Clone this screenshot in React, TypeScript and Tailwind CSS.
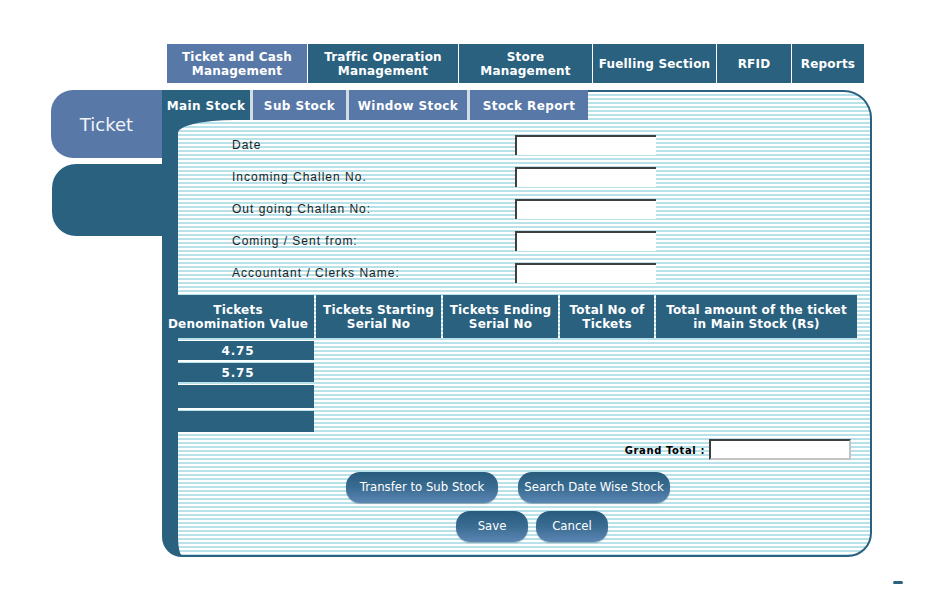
const stripes =
  'bg-[repeating-linear-gradient(180deg,#ffffff_0px,#ffffff_2px,#b9e1ea_2px,#b9e1ea_4px)] bg-fixed';

const NAV = [
  { lines: ['Ticket and Cash', 'Management'], w: 'w-[140px]', active: true },
  { lines: ['Traffic Operation', 'Management'], w: 'w-[150px]', active: false },
  { lines: ['Store', 'Management'], w: 'w-[133px]', active: false },
  { lines: ['Fuelling Section'], w: 'w-[123px]', active: false },
  { lines: ['RFID'], w: 'w-[74px]', active: false },
  { lines: ['Reports'], w: 'w-[72px]', active: false },
];

const SUB_TABS = [
  { label: 'Main Stock', w: 'w-[88px]', active: true },
  { label: 'Sub Stock', w: 'w-[96px]', active: false },
  { label: 'Window Stock', w: 'w-[121px]', active: false },
  { label: 'Stock Report', w: 'w-[121px]', active: false },
];

const FIELDS = [
  'Date',
  'Incoming Challen No.',
  'Out going Challan No:',
  'Coming / Sent from:',
  'Accountant / Clerks Name:',
];

const COLUMNS = [
  { lines: ['Tickets', 'Denomination Value'], w: 'w-[152px] -ml-[16px]' },
  { lines: ['Tickets Starting', 'Serial No'], w: 'w-[125px]' },
  { lines: ['Tickets Ending', 'Serial No'], w: 'w-[115px]' },
  { lines: ['Total No of', 'Tickets'], w: 'w-[94px]' },
  { lines: ['Total amount of the ticket', 'in Main Stock (Rs)'], w: 'w-[201px]' },
];

const ROWS = [
  { value: '4.75', h: 'h-[19px]' },
  { value: '5.75', h: 'h-[19px]' },
  { value: '', h: 'h-[23px]' },
  { value: '', h: 'h-[21px]' },
];

function PillButton({ label, w }: { label: string; w: string }) {
  return (
    <button
      className={`${w} h-[31px] rounded-[14px] bg-linear-to-b from-[#285c7c] via-[#3a6c92] to-[#5b86b4] text-white text-[11.7px] font-['DejaVu_Sans',Verdana,sans-serif] shadow-[0_1px_1px_rgba(0,0,0,0.25)]`}
    >
      {label}
    </button>
  );
}

export default function App() {
  return (
    <div className="relative w-[951px] h-[591px] bg-white overflow-hidden font-['DejaVu_Sans',Verdana,sans-serif]">
      {/* Top navigation */}
      <nav className="flex gap-px pl-[167px] pt-[44px]">
        {NAV.map((item) => (
          <div
            key={item.lines.join(' ')}
            className={`${item.w} h-[39px] flex flex-col items-center justify-center text-white text-[12px] font-bold leading-[14px] tracking-[0.2px] ${
              item.active ? 'bg-[#5878a8]' : 'bg-[#29617f]'
            }`}
          >
            {item.lines.map((l) => (
              <span key={l}>{l}</span>
            ))}
          </div>
        ))}
      </nav>

      <div className="flex pl-[51px] mt-[7px]">
        {/* Left side tabs */}
        <div className="w-[111px] flex flex-col">
          <div className="h-[68px] rounded-l-[22px] bg-[#5878a8] flex items-center justify-center text-[18px] text-[#f0f4f8]">
            Ticket
          </div>
          <div className="h-[72px] ml-px mt-[6px] rounded-l-[24px] bg-[#29617f]" />
        </div>

        {/* Main panel */}
        <div
          className={`w-[710px] h-[467px] flex flex-col border-2 border-l-[16px] border-[#29617f] rounded-tr-[28px] rounded-br-[24px] rounded-bl-[20px] ${stripes}`}
        >
          <div className="flex -mt-[2px] -ml-[16px] h-[30px]">
            {SUB_TABS.map((t, i) => (
              <div
                key={t.label}
                className={`${t.w} h-full flex items-center justify-center pt-[2px] text-white text-[12px] font-bold tracking-[0.4px] ${
                  t.active ? 'bg-[#29617f]' : 'bg-[#5878a8]'
                } ${i > 0 ? 'border-l-[3px] border-[#d3dbe4]' : ''}`}
              >
                {t.label}
              </div>
            ))}
          </div>

          <div className="relative flex-1 flex flex-col">
            {/* curved corner under the active tab */}
            <div className="absolute left-0 top-0 w-[70px] h-[16px] bg-[#29617f]">
              <div className={`absolute inset-0 rounded-tl-[56px_13px] ${stripes}`} />
            </div>

            {/* Form fields */}
            <div className="relative flex flex-col gap-[12px] pt-[15px]">
              {FIELDS.map((f) => (
                <div key={f} className="flex items-center h-[20px]">
                  <span className="w-[337px] pl-[54px] text-[12px] tracking-[1px] text-[#1e1e1e] font-['Liberation_Sans',Arial,sans-serif]">
                    {f}
                  </span>
                  <div className="w-[141px] h-[20px] bg-white border-t-2 border-l-2 border-[#3e3e3e]" />
                </div>
              ))}
            </div>

            {/* Ticket table */}
            <div className="mt-[12px] flex gap-[2px] h-[43px]">
              {COLUMNS.map((c) => (
                <div
                  key={c.lines.join(' ')}
                  className={`${c.w} bg-[#29617f] flex flex-col items-center justify-center text-white text-[12px] font-bold leading-[14px] tracking-[0.2px] whitespace-nowrap`}
                >
                  {c.lines.map((l) => (
                    <span key={l}>{l}</span>
                  ))}
                </div>
              ))}
            </div>
            <div className="mt-[3px] flex flex-col gap-[3px]">
              {ROWS.map((r, i) => (
                <div
                  key={i}
                  className={`${r.h} w-[136px] bg-[#29617f] pr-[16px] flex items-center justify-center text-white text-[12px] font-bold tracking-[0.8px]`}
                >
                  {r.value}
                </div>
              ))}
            </div>

            {/* Grand total */}
            <div className="mt-[7px] flex items-end justify-end pr-[19px]">
              <span className="mr-[4px] mb-[2px] text-[10px] font-bold tracking-[0.6px] text-black">Grand Total :</span>
              <div className="w-[142px] h-[21px] bg-white border-2 border-t-[#3e3e3e] border-l-[#3e3e3e] border-r-[#c4c4c4] border-b-[#c4c4c4]" />
            </div>

            {/* Actions */}
            <div className="mt-[12px] flex gap-[20px] pl-[168px]">
              <PillButton label="Transfer to Sub Stock" w="w-[152px]" />
              <PillButton label="Search Date Wise Stock" w="w-[152px]" />
            </div>
            <div className="mt-[8px] flex gap-[8px] pl-[278px]">
              <PillButton label="Save" w="w-[72px]" />
              <PillButton label="Cancel" w="w-[72px]" />
            </div>
          </div>
        </div>
      </div>

      <div className="absolute left-[893px] top-[581px] w-[10px] h-[3px] rounded-full bg-[#29617f]" />
    </div>
  );
}
